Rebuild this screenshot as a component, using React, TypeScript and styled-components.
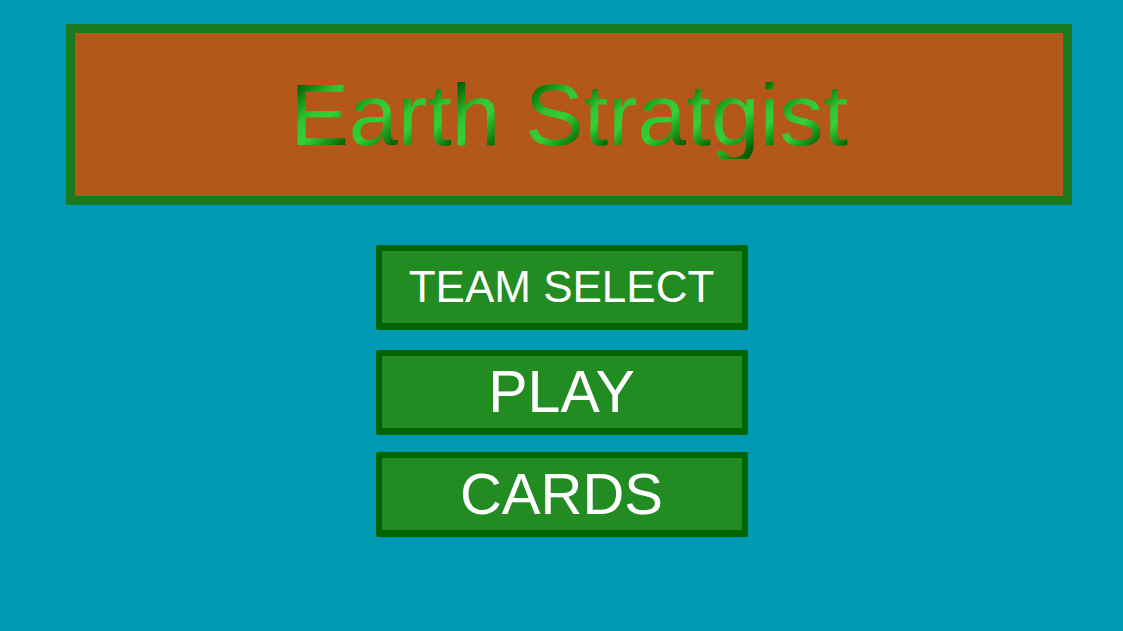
import styled, { createGlobalStyle } from 'styled-components'

const Global = createGlobalStyle`
  html, body {
    margin: 0;
    padding: 0;
    background: #0099b3;
    font-family: "Liberation Sans", Arial, sans-serif;
  }
`

const Screen = styled.main`
  width: 1123px;
  height: 631px;
  display: flex;
  flex-direction: column;
  background: #0099b3;
  overflow: hidden;
`

const TitleBox = styled.header`
  box-sizing: border-box;
  margin: 24px 0 0 66px;
  width: 1006px;
  height: 181px;
  border: 9px solid #1a7a1f;
  background: #b35818;
  display: flex;
  align-items: center;
  justify-content: center;
`

const Title = styled.h1`
  margin: 0;
  font-size: 88px;
  font-weight: normal;
  line-height: 1;
  white-space: pre;
`

// each glyph carries its own corner gradient
const Glyph = styled.span`
  display: inline-block;
  background: linear-gradient(135deg, #005c00 14%, #2fc42f 42%, #34d034 58%, #005c00 88%);
  -webkit-background-clip: text;
  background-clip: text;
  color: transparent;
`

const Menu = styled.nav`
  display: flex;
  flex-direction: column;
  align-items: center;
`

const MenuButton = styled.button<{ $top: number; $size: number }>`
  box-sizing: border-box;
  margin-top: ${(p) => p.$top}px;
  width: 372px;
  height: 85px;
  border: 6px solid #006400;
  border-bottom-width: 7px;
  border-radius: 2px;
  background: #228b22;
  color: #ffffff;
  font-family: "Liberation Sans", Arial, sans-serif;
  font-size: ${(p) => p.$size}px;
  line-height: 1;
  padding: 0;
  display: flex;
  align-items: center;
  justify-content: center;
  cursor: pointer;
`

const title = 'Earth Stratgist'

const App = () => {
  return (
    <Screen>
      <Global />
      <TitleBox>
        <Title>
          {title.split('').map((ch, i) => (
            <Glyph key={i}>{ch}</Glyph>
          ))}
        </Title>
      </TitleBox>
      <Menu>
        <MenuButton $top={40} $size={44}>TEAM SELECT</MenuButton>
        <MenuButton $top={20} $size={59}>PLAY</MenuButton>
        <MenuButton $top={17} $size={58}>CARDS</MenuButton>
      </Menu>
    </Screen>
  )
}

export default App
